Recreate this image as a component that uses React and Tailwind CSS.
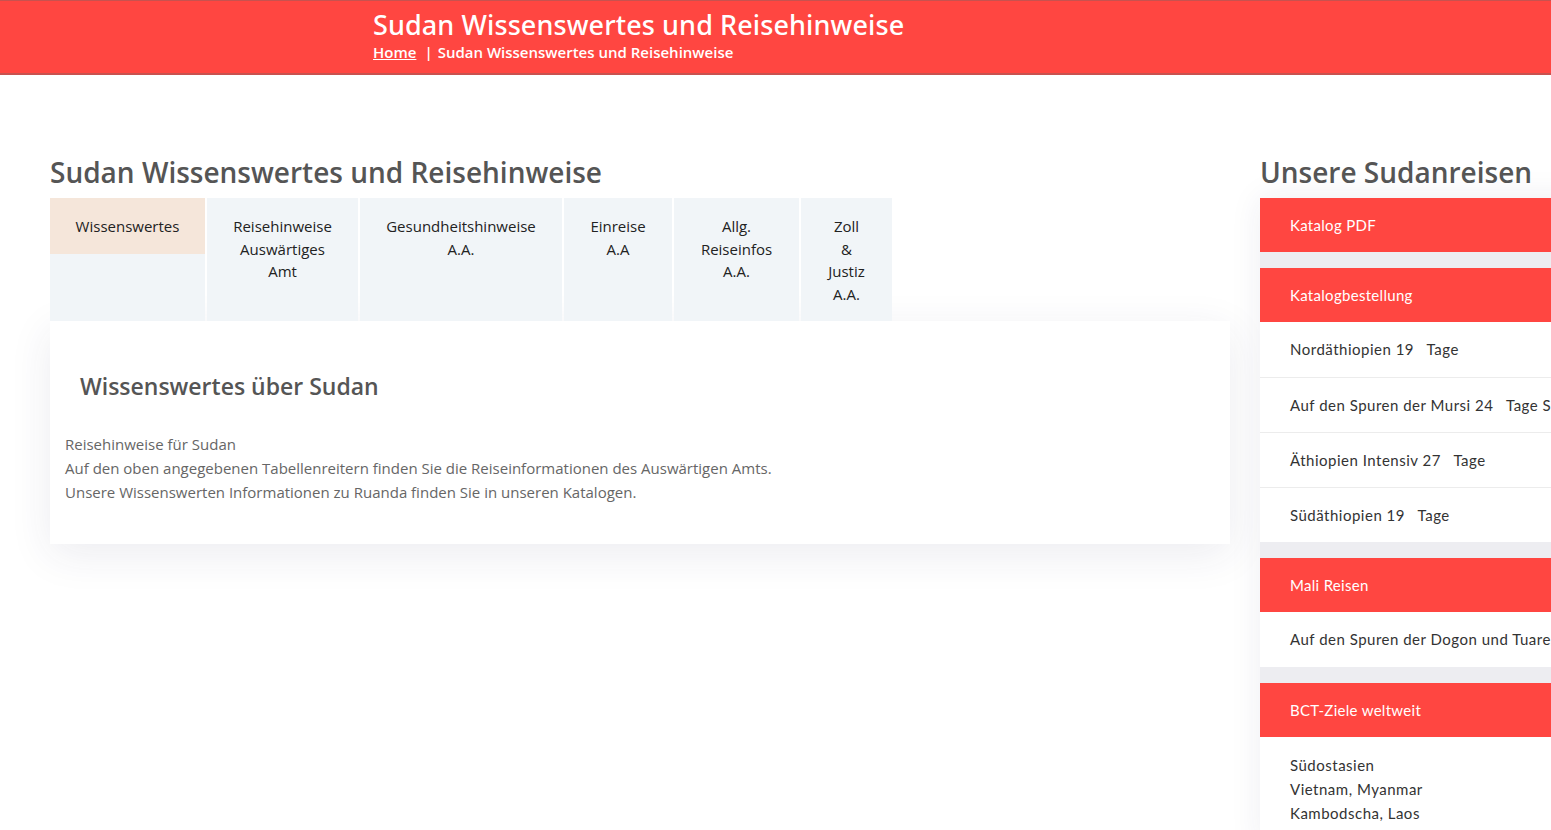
import React from 'react';

const tabs = [
  { key: 'wissen', lines: ['Wissenswertes'], w: 'w-[155px]', active: true },
  { key: 'reise', lines: ['Reisehinweise', 'Auswärtiges', 'Amt'], w: 'w-[151px]' },
  { key: 'gesund', lines: ['Gesundheitshinweise', 'A.A.'], w: 'w-[202px]' },
  { key: 'einreise', lines: ['Einreise', 'A.A'], w: 'w-[108px]' },
  { key: 'allg', lines: ['Allg.', 'Reiseinfos', 'A.A.'], w: 'w-[125px]' },
  { key: 'zoll', lines: ['Zoll', '&', 'Justiz', 'A.A.'], w: 'w-[91px]' },
];

const sideCards = [
  { title: 'Katalog PDF', items: [] },
  {
    title: 'Katalogbestellung',
    items: [
      'Nordäthiopien 19\u00a0\u00a0\u00a0Tage',
      'Auf den Spuren der Mursi 24\u00a0\u00a0\u00a0Tage Süd',
      'Äthiopien Intensiv 27\u00a0\u00a0\u00a0Tage',
      'Südäthiopien 19\u00a0\u00a0\u00a0Tage',
    ],
  },
  { title: 'Mali Reisen', items: ['Auf den Spuren der Dogon und Tuareg'] },
];

const Tab = ({ tab }) => (
  <div className={`${tab.w} shrink-0 bg-[#f1f5f8] flex flex-col`}>
    <div
      className={`px-3 pt-[17px] pb-[16px] text-center text-[15px] leading-[22.5px] text-[#222] ${
        tab.active ? 'bg-[#f5e6da]' : ''
      }`}
    >
      {tab.lines.map((l) => (
        <div key={l}>{l}</div>
      ))}
    </div>
  </div>
);

export default function App() {
  const segoe = { fontFamily: '"Open Sans", "Noto Sans", sans-serif' };
  return (
    <div className="w-[1551px] h-[830px] overflow-hidden bg-white" style={segoe}>
      {/* Header */}
      <header className="h-[75px] bg-[#ff4641] border-t border-b-2 border-[#c8524f] flex flex-col pl-[373px] pt-[7px]">
        <h1
          className="text-[27px] leading-[34px] font-medium text-white tracking-[0.1px]"
          style={{ fontFamily: '"Noto Sans", "Open Sans", sans-serif' }}
        >
          Sudan Wissenswertes und Reisehinweise
        </h1>
        <div className="text-[15px] leading-[22px] font-semibold text-white -mt-[1px]">
          <span className="underline">Home</span>
          <span className="ml-2">|</span>
          <span className="ml-[5px]">Sudan Wissenswertes und Reisehinweise</span>
        </div>
      </header>

      {/* Body */}
      <div className="flex gap-[30px] pl-[50px] pt-[83px]">
        {/* Main column */}
        <main className="w-[1180px] shrink-0">
          <h2 className="text-[28px] leading-[28px] font-semibold text-[#555] pb-[12px]">
            Sudan Wissenswertes und Reisehinweise
          </h2>
          <div className="flex gap-[2px] items-stretch">
            {tabs.map((t) => (
              <Tab key={t.key} tab={t} />
            ))}
          </div>
          <section className="bg-white shadow-[0_10px_40px_rgba(40,40,90,0.09)] pt-[48px] pb-[40px] px-[15px]">
            <h3 className="text-[23px] leading-[34px] font-semibold text-[#555] pl-[15px]">
              Wissenswertes über Sudan
            </h3>
            <div className="mt-[29px] text-[15px] leading-[24px] text-[#666]">
              <p>Reisehinweise für Sudan</p>
              <p>Auf den oben angegebenen Tabellenreitern finden Sie die Reiseinformationen des Auswärtigen Amts.</p>
              <p>Unsere Wissenswerten Informationen zu Ruanda finden Sie in unseren Katalogen.</p>
            </div>
          </section>
        </main>

        {/* Sidebar */}
        <aside className="w-[360px] shrink-0">
          <h2 className="text-[28px] leading-[28px] font-semibold text-[#555] pb-[12px]">
            Unsere Sudanreisen
          </h2>
          <div
            className="bg-[#ededf1] shadow-[0_0_30px_rgba(40,40,90,0.08)] flex flex-col gap-[16px]"
            style={{ fontFamily: 'Lato, "Noto Sans", sans-serif' }}
          >
            {sideCards.map((c) => (
              <div key={c.title} className="bg-white">
                <div className="h-[54px] bg-[#ff4641] text-white text-[15px] flex items-center px-[30px] tracking-[0.3px]">
                  {c.title}
                </div>
                {c.items.map((it, i) => (
                  <div
                    key={it}
                    className={`h-[55px] flex items-center px-[30px] text-[15px] text-[#333] whitespace-nowrap overflow-hidden tracking-[0.5px] ${
                      i > 0 ? 'border-t border-[#ececec]' : ''
                    }`}
                  >
                    {it}
                  </div>
                ))}
              </div>
            ))}
            <div className="bg-white">
              <div className="h-[54px] bg-[#ff4641] text-white text-[15px] flex items-center px-[30px] tracking-[0.3px]">
                BCT-Ziele weltweit
              </div>
              <div className="px-[30px] pt-[16px] pb-[20px] text-[15px] leading-[24px] text-[#333] tracking-[0.5px]">
                <div>Südostasien</div>
                <div>Vietnam, Myanmar</div>
                <div>Kambodscha, Laos</div>
              </div>
            </div>
          </div>
        </aside>
      </div>
    </div>
  );
}
